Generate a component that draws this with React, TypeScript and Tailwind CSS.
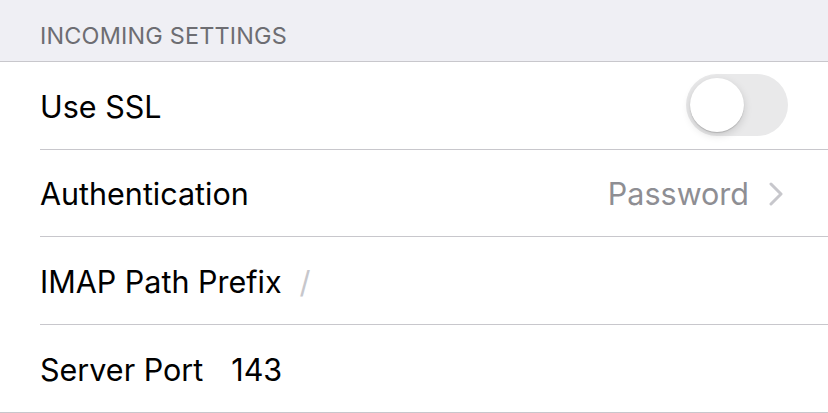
export default function App() {
  return (
    <div className="w-[828px] h-[413px] overflow-hidden bg-white font-['Inter','Noto_Sans',sans-serif]">
      {/* Section header */}
      <div className="h-[62px] bg-[#efeff4] border-b border-[#c8c7cc] flex items-end pl-[40px] pb-[14px]">
        <span className="text-[23.4px] leading-none tracking-[0.2px] text-[#6d6d72]">INCOMING SETTINGS</span>
      </div>

      {/* Rows */}
      <div className="pl-[40px]">
        <div className="h-[87.5px] border-b border-[#c8c7cc] flex items-center justify-between pr-[40px]">
          <span className="text-[30.5px] text-black pt-[3px]">Use SSL</span>
          <div className="w-[102px] h-[62px] rounded-full bg-[#e9e9ea] p-[4px] flex items-center">
            <div className="w-[54px] h-[54px] rounded-full bg-white shadow-[0_3px_8px_rgba(0,0,0,0.15),0_1px_1px_rgba(0,0,0,0.16)]"></div>
          </div>
        </div>

        <div className="h-[87.5px] border-b border-[#c8c7cc] flex items-center justify-between pr-[45px] pt-[3px]">
          <span className="text-[30.5px] text-black">Authentication</span>
          <div className="flex items-center gap-[20px]">
            <span className="text-[30.5px] text-[#8e8e93]">Password</span>
            <svg width="14" height="24" viewBox="0 0 14 24" fill="none">
              <path d="M2 2 L12 12 L2 22" stroke="#c7c7cc" strokeWidth="3" strokeLinecap="round" strokeLinejoin="round" />
            </svg>
          </div>
        </div>

        <div className="h-[87.5px] border-b border-[#c8c7cc] flex items-center gap-[18px] pt-[3px]">
          <span className="text-[30.5px] text-black">IMAP Path Prefix</span>
          <span className="text-[30.5px] text-[#c7c7cc]">/</span>
        </div>

        <div className="h-[87.5px] flex items-center gap-[28px] pt-[3px]">
          <span className="text-[30.5px] text-black">Server Port</span>
          <span className="text-[30.5px] text-black">143</span>
        </div>
      </div>
      <div className="border-b border-[#c8c7cc]"></div>
    </div>
  );
}
